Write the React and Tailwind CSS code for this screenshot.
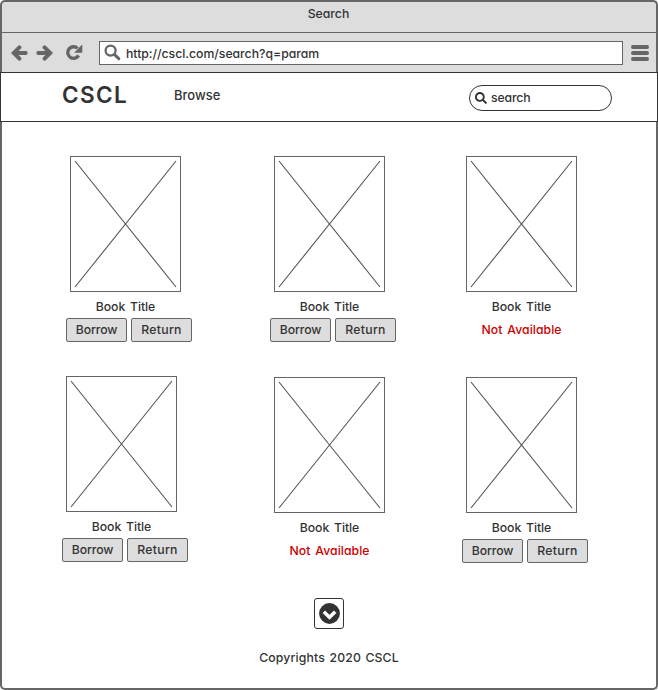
import { FaSearch } from "react-icons/fa";

function Cover() {
  return (
    <div className="ml-1 h-[136px] w-[111px] border border-[#666]">
      <svg className="block h-full w-full" viewBox="0 0 109 134" fill="none" stroke="#555" strokeWidth="1.1">
        <path d="M4 4 105 130M105 4 4 130" />
      </svg>
    </div>
  );
}

function Arrow({ className = "" }) {
  return (
    <svg className={`h-4 w-[17px] ${className}`} viewBox="0 0 17 16" fill="none" stroke="#666">
      <path d="M14.8 8H4" strokeWidth="3.8" strokeLinecap="round" />
      <path d="M8.4 2.4 2.8 8l5.6 5.6" strokeWidth="4" strokeLinecap="round" />
    </svg>
  );
}

function Action({ children, text }) {
  return (
    <button className="flex h-6 w-[61px] items-center justify-center rounded-[2px] border border-[#666] bg-[#ddd] pb-px">
      <span className={text}>{children}</span>
    </button>
  );
}

function Book({ available, className = "" }) {
  return (
    <article className={`w-[126px] ${className}`}>
      <Cover />
      <div className="ml-1 flex h-[26px] w-[111px] items-center justify-center pt-1 tracking-[-0.1px] [word-spacing:1.8px] whitespace-nowrap">
        Book Title
      </div>
      {available ? (
        <div className="flex gap-1">
          <Action text="tracking-[-0.1px]">Borrow</Action>
          <Action text="tracking-[0.3px]">Return</Action>
        </div>
      ) : (
        <div className="ml-1 flex h-[23px] w-[111px] items-center justify-center tracking-[0.05px] [word-spacing:1.5px] whitespace-nowrap text-[#cc0000]">
          Not Available
        </div>
      )}
    </article>
  );
}

export default function App() {
  return (
    <div className="flex h-[690px] w-[658px] flex-col bg-white font-['Inter','Open_Sans',sans-serif] text-[12.25px] leading-4 font-medium text-[#333] [font-feature-settings:'cv11']">
      <header className="h-[72px] shrink-0 rounded-t-[5px] border-2 border-b-0 border-[#666] bg-[#ddd]">
        <div className="flex h-[31px] justify-center border-b border-[#666] pt-1 pr-px">Search</div>
        <div className="flex h-[39px] items-center pl-[9px]">
          <Arrow />
          <Arrow className="ml-2 rotate-180" />
          <svg className="ml-3 h-[17px] w-[18px] text-[#666]" viewBox="0 0 18 17" fill="none">
            <path d="M13.6 11.4A5.8 5.8 0 1 1 12.6 4.4" stroke="currentColor" strokeWidth="3.4" />
            <path d="M17 1V8.4H9.8z" fill="currentColor" stroke="currentColor" strokeWidth=".6" />
          </svg>
          <div className="ml-4 flex h-6 w-[524px] items-center border border-[#666] bg-white pl-1">
            <svg className="h-[18px] w-[18px]" viewBox="0 0 18 18" fill="none" stroke="#666">
              <circle cx="6.6" cy="6.6" r="5" strokeWidth="2.3" />
              <path d="m10.6 10.6 4.2 4" strokeWidth="3" strokeLinecap="round" />
            </svg>
            <span className="ml-1 pt-0.5 tracking-[-0.02px]">http://cscl.com/search?q=param</span>
          </div>
          <div className="ml-2 flex flex-col gap-0.5">
            <span className="h-1 w-[18px] rounded-full bg-[#666]" />
            <span className="h-1 w-[18px] rounded-full bg-[#666]" />
            <span className="h-1 w-[18px] rounded-full bg-[#666]" />
          </div>
        </div>
      </header>

      <nav className="flex h-[50px] shrink-0 border border-[#333] pl-[61px]">
        <h1 className="w-28 pt-2 text-[22.5px] leading-7 font-semibold tracking-[1.4px]">CSCL</h1>
        <a className="pt-3.5 text-[13px] leading-4">Browse</a>
        <div className="mt-3 mr-[45px] ml-auto flex h-[26px] w-[143px] items-center rounded-full border border-[#333] pl-[5px]">
          <FaSearch className="h-3 w-3" />
          <span className="ml-1 tracking-[-0.15px]">search</span>
        </div>
      </nav>

      <main className="flex grow flex-col rounded-b-[5px] border-2 border-t-0 border-[#666]">
        <section className="grid grid-cols-[204px_192px_126px] pt-[34px] pl-16">
          <Book available className="h-[221px]" />
          <Book available />
          <Book />
          <Book available className="-mt-px -ml-1" />
          <Book />
          <Book available />
        </section>
        <footer className="mt-[35px] flex flex-col items-center">
          <button className="flex h-[31px] w-[30px] items-center justify-center rounded-[3px] border border-[#333]">
            <svg className="h-[21px] w-[21px] shrink-0" viewBox="0 0 21 21" fill="none">
              <circle cx="10.5" cy="10.5" r="10.4" fill="#333" />
              <path d="m4.8 8.7 5.7 5.6 5.7-5.6" stroke="#fff" strokeWidth="3.5" />
            </svg>
          </button>
          <p className="mt-[21px] tracking-[0.15px] [word-spacing:1px]">Copyrights 2020 CSCL</p>
        </footer>
      </main>
    </div>
  );
}
